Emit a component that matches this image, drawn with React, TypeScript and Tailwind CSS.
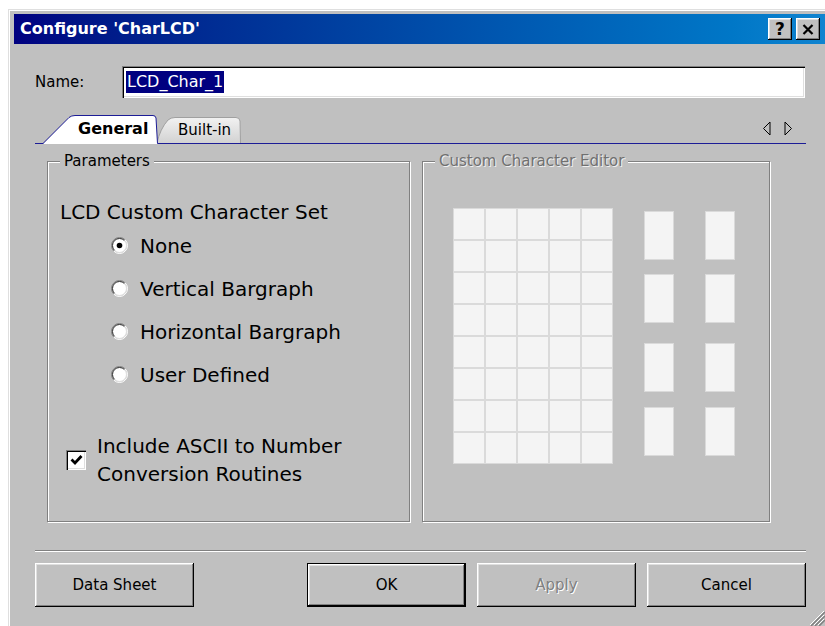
import React from "react";

const raised =
  "shadow-[inset_-1px_-1px_0_#000,inset_1px_1px_0_#fff,inset_-2px_-2px_0_#808080,inset_2px_2px_0_#dfdfdf]";
const sunken =
  "shadow-[inset_1px_1px_0_#808080,inset_2px_2px_0_#000,inset_-1px_-1px_0_#fff,inset_-2px_-2px_0_#dfdfdf]";
const etched = "border border-[#808080] shadow-[1px_1px_0_#fff,inset_1px_1px_0_#fff]";

function Radio({ checked }: { checked?: boolean }) {
  return (
    <svg width="17" height="17" viewBox="0 0 17 17">
      <circle cx="8.5" cy="8.5" r="7" fill="#fff" />
      <path d="M2.84 14.16A8 8 0 0 1 14.16 2.84" fill="none" stroke="#808080" />
      <path d="M3.55 13.45A7 7 0 0 1 13.45 3.55" fill="none" stroke="#303030" />
      <path d="M14.16 2.84A8 8 0 0 1 2.84 14.16" fill="none" stroke="#fff" />
      <path d="M13.45 3.55A7 7 0 0 1 3.55 13.45" fill="none" stroke="#dfdfdf" />
      {checked && <circle cx="8.5" cy="8.5" r="2.8" fill="#000" />}
    </svg>
  );
}

function Checkbox() {
  return (
    <div className={`w-[20px] h-[20px] bg-white ${sunken} flex items-center justify-center`}>
      <svg width="13" height="12" viewBox="0 0 13 12">
        <path d="M1.5 5.5 L5 9 L11.5 2" fill="none" stroke="#000" strokeWidth="2.8" />
      </svg>
    </div>
  );
}

function Button({ label, primary, disabled }: { label: string; primary?: boolean; disabled?: boolean }) {
  return (
    <div
      className={`w-[159px] h-[44px] flex items-center justify-center text-[15px] ${raised} ${
        primary ? "border border-black" : ""
      } ${disabled ? "text-[#808080] [text-shadow:1px_1px_0_#fff]" : "text-black"}`}
    >
      {label}
    </div>
  );
}

function GroupLabel({ text, disabled }: { text: string; disabled?: boolean }) {
  return (
    <span
      className={`absolute -top-[10px] left-[12px] px-[4px] bg-[#c0c0c0] text-[15px] leading-[18px] ${
        disabled ? "text-[#707070] [text-shadow:1px_1px_0_#f0f0f0]" : "text-black"
      }`}
    >
      {text}
    </span>
  );
}

const radios = ["None", "Vertical Bargraph", "Horizontal Bargraph", "User Defined"];

export default function App() {
  return (
    <div className="relative w-[825px] h-[626px] overflow-hidden bg-white pl-[8px] pt-[9px] font-['DejaVu_Sans',sans-serif]">
      {/* Dialog window */}
      <div className="w-[840px] h-[640px] bg-[#c0c0c0] border-l border-t border-[#dfdfdf] shadow-[inset_1px_1px_0_#fff] pl-[5px] pt-[4px]">
        {/* Title bar */}
        <div className="w-[811px] h-[30px] flex items-center justify-between pl-[6px] pr-[5px] bg-gradient-to-r from-[#000080] to-[#1084d0]">
          <span className="text-white font-bold text-[16px]">Configure 'CharLCD'</span>
          <div className="flex gap-[4px]">
            <div className={`w-[24px] h-[22px] bg-[#c0c0c0] ${raised} flex items-center justify-center text-[17px] font-bold leading-none text-black`}>
              ?
            </div>
            <div className={`w-[24px] h-[22px] bg-[#c0c0c0] ${raised} flex items-center justify-center`}>
              <svg width="12" height="11" viewBox="0 0 12 11">
                <path d="M1.5 1 L10.5 10 M10.5 1 L1.5 10" stroke="#000" strokeWidth="2.2" />
              </svg>
            </div>
          </div>
        </div>

        <div className="pl-[21px] w-[792px]">
          {/* Name */}
          <div className="mt-[22px] flex items-center h-[32px]">
            <span className="w-[87px] text-[15px] text-black">Name:</span>
            <div className={`w-[683px] h-[32px] bg-white ${sunken} flex items-center`}>
              <span className="ml-[4px] px-[1px] bg-[#000080] text-white text-[16px] leading-[22px]">LCD_Char_1</span>
            </div>
          </div>

          {/* Tabs */}
          <div className="mt-[15px] w-[771px] h-[31px] flex items-end border-b border-[#1c1c96]">
            <div className="relative z-10 ml-[8px] w-[115px] h-[29px] -mb-[1px] flex items-center pl-[35px] pb-[2px]">
              <svg className="absolute inset-0" width="115" height="29" viewBox="0 0 115 29">
                <path d="M0 29 L26 2.5 Q28.5 0.5 32 0.5 L110 0.5 Q112.5 0.5 113 3 L114.5 29 Z" fill="#fff" />
                <path d="M0 28.5 L26 2.5 Q28.5 0.5 32 0.5 L110 0.5 Q112.5 0.5 113 3 L114.5 28.5" fill="none" stroke="#1c1c96" />
              </svg>
              <span className="relative font-bold text-[16px] text-black">General</span>
            </div>
            <div className="relative -ml-[2px] w-[86px] h-[26px] flex items-center pl-[22px]">
              <svg className="absolute inset-0" width="86" height="26" viewBox="0 0 86 26">
                <defs>
                  <linearGradient id="tabfill" x1="0" y1="0" x2="0" y2="1">
                    <stop offset="0" stopColor="#f2f2f2" />
                    <stop offset="1" stopColor="#d2d2d2" />
                  </linearGradient>
                </defs>
                <path d="M1 26 Q4 12 12 3 Q15 0.5 19 0.5 L80 0.5 Q83.5 0.5 84 4 L84.5 26" fill="url(#tabfill)" stroke="#a0a0a0" />
              </svg>
              <span className="relative text-[15px] text-black">Built-in</span>
            </div>
            <div className="ml-auto mb-[7px] mr-[13px] flex gap-[13px]">
              <svg width="9" height="15" viewBox="0 0 9 15">
                <path d="M8 1 L1.5 7.5 L8 14 Z" fill="none" stroke="#000" />
              </svg>
              <svg width="9" height="15" viewBox="0 0 9 15">
                <path d="M1 1 L7.5 7.5 L1 14 Z" fill="none" stroke="#000" />
              </svg>
            </div>
          </div>

          {/* Group boxes */}
          <div className="mt-[17px] pl-[12px] flex">
            <div className={`relative w-[363px] h-[361px] ${etched} pt-[38px]`}>
              <GroupLabel text="Parameters" />
              <div className="pl-[12px] text-[20px] leading-[24px] text-black">LCD Custom Character Set</div>
              <div className="flex flex-col">
                {radios.map((r, i) => (
                  <div key={r} className="h-[43px] flex items-center pl-[63px] gap-[12px]">
                    <Radio checked={i === 0} />
                    <span className="text-[20px] text-black">{r}</span>
                  </div>
                ))}
              </div>
              <div className="mt-[36px] pl-[18px] flex items-center gap-[11px]">
                <Checkbox />
                <div className="text-[20px] leading-[28px] text-black">
                  Include ASCII to Number
                  <br />
                  Conversion Routines
                </div>
              </div>
            </div>

            <div className={`relative ml-[12px] w-[348px] h-[361px] ${etched} pl-[30px] pt-[46px] flex items-start`}>
              <GroupLabel text="Custom Character Editor" disabled />
              <div className="grid grid-cols-5 gap-[2px] p-[1px] bg-[#dadada]">
                {Array.from({ length: 40 }).map((_, i) => (
                  <div key={i} className="w-[30px] h-[30px] bg-[#f4f4f4]" />
                ))}
              </div>
              {[0, 1].map((c) => (
                <div key={c} className="ml-[31px] mt-[3px] flex flex-col">
                  <div className="w-[30px] h-[49px] border border-[#dadada] bg-[#f4f4f4]" />
                  <div className="mt-[14px] w-[30px] h-[49px] border border-[#dadada] bg-[#f4f4f4]" />
                  <div className="mt-[20px] w-[30px] h-[49px] border border-[#dadada] bg-[#f4f4f4]" />
                  <div className="mt-[15px] w-[30px] h-[49px] border border-[#dadada] bg-[#f4f4f4]" />
                </div>
              ))}
            </div>
          </div>

          {/* Separator */}
          <div className="mt-[28px] w-[771px] h-[2px] border-t border-[#808080] border-b border-b-white" />

          {/* Buttons */}
          <div className="mt-[11px] flex">
            <Button label="Data Sheet" />
            <div className="ml-[113px]">
              <Button label="OK" primary />
            </div>
            <div className="ml-[11px]">
              <Button label="Apply" disabled />
            </div>
            <div className="ml-[11px]">
              <Button label="Cancel" />
            </div>
          </div>
        </div>
      </div>

      {/* Resize grip */}
      <svg className="absolute right-0 bottom-0" width="18" height="18" viewBox="0 0 18 18">
        <path d="M17 3 L3 17 M17 7 L7 17 M17 11 L11 17" stroke="#fff" />
        <path d="M18 4 L4 18 M18 8 L8 18 M18 12 L12 18" stroke="#808080" strokeWidth="1.5" />
      </svg>
    </div>
  );
}
